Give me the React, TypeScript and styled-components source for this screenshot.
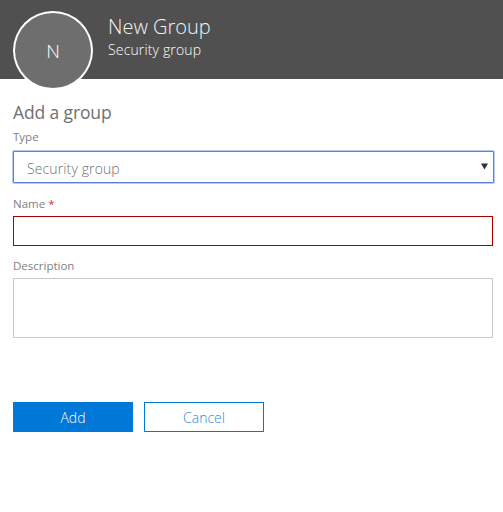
import React from "react";
import styled, { createGlobalStyle } from "styled-components";

const Global = createGlobalStyle`
  html, body { margin: 0; padding: 0; background: #fff; }
  body { font-family: "Open Sans", "Noto Sans", "Liberation Sans", sans-serif; width: 503px; height: 512px; overflow: hidden; }
  * { box-sizing: border-box; }
`;

const Header = styled.header`
  display: flex;
  align-items: flex-start;
  gap: 15px;
  height: 79px;
  padding-left: 13px;
  background: #505050;
`;

const Avatar = styled.div`
  display: flex;
  align-items: center;
  justify-content: center;
  flex: none;
  width: 80px;
  height: 79px;
  margin-top: 11px;
  border: 2px solid #fff;
  border-radius: 50%;
  background: #6e6e6e;
  color: #fff;
  font-size: 19px;
  font-weight: 300;
  padding-top: 1px;
`;

const HeaderText = styled.div`
  display: flex;
  flex-direction: column;
  padding-top: 14px;
  color: #fff;
`;

const Title = styled.div`
  font-size: 20px;
  line-height: 26px;
  font-weight: 300;
  color: #f4f4f4;
`;

const Subtitle = styled.div`
  font-size: 14px;
  line-height: 20px;
  font-weight: 300;
  letter-spacing: 0.15px;
  color: #ffffff;
`;

const Form = styled.form`
  display: flex;
  flex-direction: column;
  padding: 20px 10px 0 13px;
`;

const Heading = styled.h2`
  margin: 0 0 5px;
  font-size: 17.5px;
  line-height: 26px;
  font-weight: 400;
  color: #707070;
  letter-spacing: -0.13px;
`;

const Label = styled.label<{ $gap: number }>`
  display: block;
  height: 13px;
  margin-bottom: ${(p) => p.$gap}px;
  font-size: 11.5px;
  line-height: 13px;
  color: #808080;
`;

const Required = styled.span`
  color: #c8393b;
`;

const SelectWrap = styled.div`
  position: relative;
  width: 481px;
  height: 32px;
  margin-bottom: 14px;
`;

const Select = styled.select`
  display: block;
  width: 100%;
  height: 100%;
  appearance: none;
  padding: 3px 13px 0;
  border: 1px solid #5b82d6;
  box-shadow: 0 0 0 1px rgba(120, 160, 230, 0.55);
  border-radius: 1px;
  background: #fff;
  outline: none;
  font: inherit;
  font-size: 14px;
  font-weight: 300;
  letter-spacing: 0.12px;
  color: #707070;
`;

const Arrow = styled.svg`
  position: absolute;
  top: 12px;
  right: 6px;
  width: 7px;
  height: 7px;
  fill: #333;
`;

const NameInput = styled.input`
  display: block;
  width: 480px;
  height: 30px;
  margin-bottom: 13px;
  padding: 0 12px;
  border: 1px solid #a80000;
  background: #fff;
  outline: none;
`;

const Description = styled.textarea`
  display: block;
  width: 480px;
  height: 60px;
  margin-bottom: 64px;
  padding: 6px 12px;
  border: 1px solid #c8c8c8;
  background: #fff;
  outline: none;
  resize: none;
`;

const Actions = styled.div`
  display: flex;
  gap: 11px;
`;

const Button = styled.button<{ $primary?: boolean }>`
  width: 120px;
  height: 30px;
  padding: 0;
  border: 1px solid #0078d7;
  background: ${(p) => (p.$primary ? "#0078d7" : "#fff")};
  color: ${(p) => (p.$primary ? "#ffffff" : "#2f8ddb")};
  font-family: inherit;
  font-size: 14px;
  font-weight: 300;
`;

export default function App() {
  return (
    <>
      <Global />
      <Header>
        <Avatar>N</Avatar>
        <HeaderText>
          <Title>New Group</Title>
          <Subtitle>Security group</Subtitle>
        </HeaderText>
      </Header>
      <Form onSubmit={(e) => e.preventDefault()}>
        <Heading>Add a group</Heading>
        <Label $gap={8}>Type</Label>
        <SelectWrap>
          <Select defaultValue="security">
            <option value="security">Security group</option>
          </Select>
          <Arrow viewBox="0 0 7 7"><path d="M0 0.5h7L3.5 6.5z" /></Arrow>
        </SelectWrap>
        <Label $gap={6}>Name <Required>*</Required></Label>
        <NameInput />
        <Label $gap={6}>Description</Label>
        <Description />
        <Actions>
          <Button $primary type="submit">Add</Button>
          <Button type="button">Cancel</Button>
        </Actions>
      </Form>
    </>
  );
}
